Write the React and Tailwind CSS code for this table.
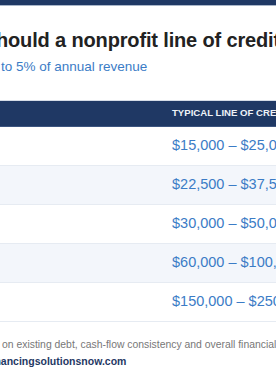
import React from "react";

const rows = [
  ["Under $500,000", "$15,000 – $25,000"],
  ["$500,000 – $750,000", "$22,500 – $37,500"],
  ["$750,000 – $1 million", "$30,000 – $50,000"],
  ["$1 million – $2 million", "$60,000 – $100,000"],
  ["$2 million – $5 million", "$150,000 – $250,000"],
];

export default function App() {
  return (
    <div
      className="w-[276px] h-[376px] overflow-hidden bg-white"
      style={{ fontFamily: '"Liberation Sans", Arial, sans-serif' }}
    >
      <div className="h-[5px] bg-[#1f3864]" />
      <div className="h-px bg-[#a9b6c9]" />

      <h1 className="mt-[22px] -ml-[15px] whitespace-nowrap text-[20px] leading-[24px] font-bold tracking-[-0.15px] text-[#222222]">
        should a nonprofit line of credit be?
      </h1>
      <p className="mt-[5px] ml-px whitespace-nowrap text-[13.5px] leading-[20px] text-[#3b7cc6]">
        to 5% of annual revenue
      </p>

      <div className="mt-[23px] -ml-[200px] w-[700px] border-t border-[#d5dce6]">
        <div className="flex h-[26px] items-center bg-[#1f3864] border-b border-[#3d5580]">
          <div className="w-[360px] shrink-0 pl-3 text-[9.6px] font-bold uppercase text-[#eef2f8]">
            Annual revenue
          </div>
          <div className="pl-3 text-[9.6px] font-bold uppercase text-[#eef2f8] whitespace-nowrap">
            Typical line of credit
          </div>
        </div>
        {rows.map((r, i) => (
          <div
            key={i}
            className={`flex h-[39px] items-center border-b border-[#e6ebf2] ${
              i % 2 === 1 ? "bg-[#f3f6fb]" : "bg-white"
            }`}
          >
            <div className="w-[360px] shrink-0 pl-3 text-[14.5px] text-[#333333]">{r[0]}</div>
            <div className="pl-3 text-[14.5px] text-[#3b7cc6] whitespace-nowrap">{r[1]}</div>
          </div>
        ))}
      </div>

      <p className="mt-[15px] ml-[2px] whitespace-nowrap text-[10.4px] leading-[16px] text-[#777777]">
        on existing debt, cash-flow consistency and overall financial health.
      </p>
      <p className="-ml-[12px] whitespace-nowrap text-[10.5px] leading-[16px] font-bold text-[#1f3864]">
        financingsolutionsnow.com
      </p>
    </div>
  );
}
